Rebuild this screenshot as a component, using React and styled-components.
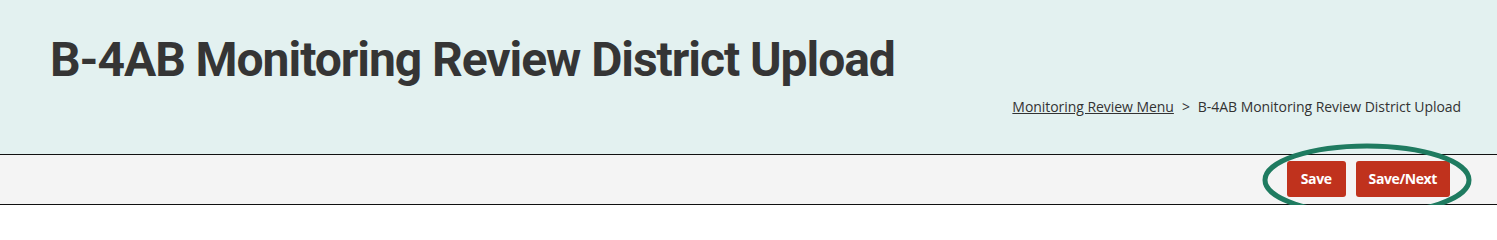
import React from "react";
import styled, { createGlobalStyle } from "styled-components";

const Global = createGlobalStyle`
  html, body { margin: 0; padding: 0; background: #ffffff; }
  body { font-family: "Open Sans", "Liberation Sans", sans-serif; }
`;

const Header = styled.header`
  background: #e3f1f0;
  height: 155px;
  box-sizing: border-box;
  padding: 30px 36px 0 50px;
  display: flex;
  flex-direction: column;
  border-bottom: 1.5px solid #111;
`;

const Title = styled.h1`
  margin: 0;
  font-family: Roboto, "Liberation Sans", sans-serif;
  font-weight: 700;
  font-size: 48px;
  line-height: 60px;
  color: #353535;
  letter-spacing: -1.05px;
`;

const Breadcrumb = styled.nav`
  align-self: flex-end;
  margin-top: 7px;
  font-size: 14px;
  color: #333;
  display: flex;
  gap: 8px;
  line-height: 20px;
  letter-spacing: -0.05px;
`;

const Crumb = styled.a`
  color: #333;
  text-decoration: underline;
  cursor: pointer;
`;

const Toolbar = styled.div`
  background: #f4f4f4;
  height: 50px;
  box-sizing: border-box;
  border-bottom: 1.5px solid #111;
  display: flex;
  justify-content: flex-end;
  align-items: center;
  padding: 0 47px 2px 0;
`;

const Actions = styled.div`
  position: relative;
  display: flex;
  gap: 10px;
`;

const Button = styled.button`
  background: #c0321d;
  color: #fff;
  border: none;
  border-radius: 3px;
  height: 36px;
  padding: 0 ${(p) => p.$pad}px;
  font-family: "Open Sans", "Liberation Sans", sans-serif;
  font-weight: 700;
  font-size: 14px;
  letter-spacing: -0.4px;
  cursor: pointer;
`;

const Ring = styled.svg`
  position: absolute;
  left: -25px;
  top: -18px;
  width: 210px;
  height: 74px;
  pointer-events: none;
  overflow: visible;
`;

export default function App() {
  return (
    <>
      <Global />
      <Header>
        <Title>B-4AB Monitoring Review District Upload</Title>
        <Breadcrumb>
          <Crumb>Monitoring Review Menu</Crumb>
          <span>&gt;</span>
          <span>B-4AB Monitoring Review District Upload</span>
        </Breadcrumb>
      </Header>
      <Toolbar>
        <Actions>
          <Button $pad={14}>Save</Button>
          <Button $pad={13}>Save/Next</Button>
          <Ring viewBox="0 0 210 74">
            <ellipse cx="105" cy="37" rx="102" ry="34" fill="none" stroke="#1f7b60" strokeWidth="5" />
          </Ring>
        </Actions>
      </Toolbar>
    </>
  );
}
